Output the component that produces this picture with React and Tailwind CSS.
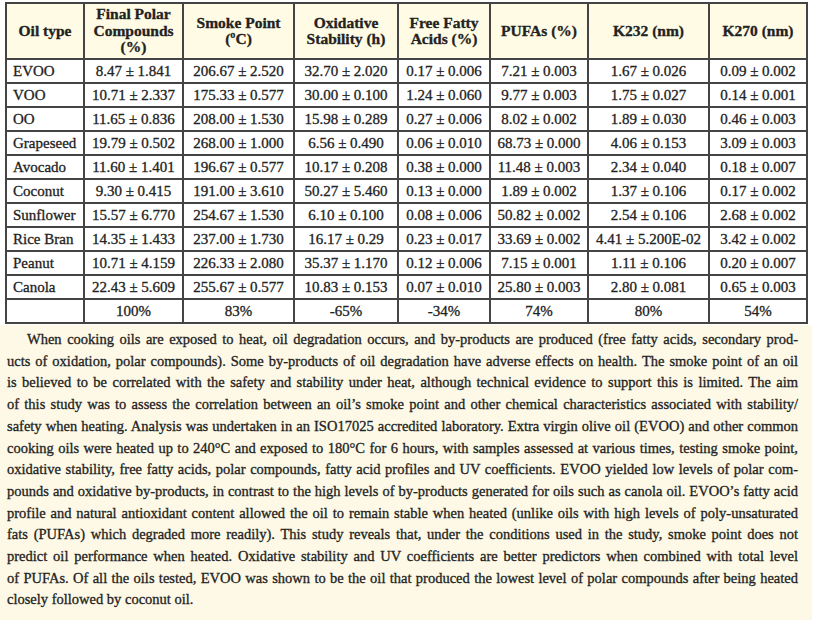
const headers = [
  ['Oil type'],
  ['Final Polar', 'Compounds', '(%)'],
  ['Smoke Point', '(ºC)'],
  ['Oxidative', 'Stability (h)'],
  ['Free Fatty', 'Acids (%)'],
  ['PUFAs (%)'],
  ['K232 (nm)'],
  ['K270 (nm)'],
];

const colWidths = ['w-[78px]', 'w-[99px]', 'w-[111px]', 'w-[104px]', 'w-[92px]', 'w-[98px]', 'w-[121px]', 'w-[98px]'];

const rows = [
  ['EVOO', '8.47 ± 1.841', '206.67 ± 2.520', '32.70 ± 2.020', '0.17 ± 0.006', '7.21 ± 0.003', '1.67 ± 0.026', '0.09 ± 0.002'],
  ['VOO', '10.71 ± 2.337', '175.33 ± 0.577', '30.00 ± 0.100', '1.24 ± 0.060', '9.77 ± 0.003', '1.75 ± 0.027', '0.14 ± 0.001'],
  ['OO', '11.65 ± 0.836', '208.00 ± 1.530', '15.98 ± 0.289', '0.27 ± 0.006', '8.02 ± 0.002', '1.89 ± 0.030', '0.46 ± 0.003'],
  ['Grapeseed', '19.79 ± 0.502', '268.00 ± 1.000', '6.56 ± 0.490', '0.06 ± 0.010', '68.73 ± 0.000', '4.06 ± 0.153', '3.09 ± 0.003'],
  ['Avocado', '11.60 ± 1.401', '196.67 ± 0.577', '10.17 ± 0.208', '0.38 ± 0.000', '11.48 ± 0.003', '2.34 ± 0.040', '0.18 ± 0.007'],
  ['Coconut', '9.30 ± 0.415', '191.00 ± 3.610', '50.27 ± 5.460', '0.13 ± 0.000', '1.89 ± 0.002', '1.37 ± 0.106', '0.17 ± 0.002'],
  ['Sunflower', '15.57 ± 6.770', '254.67 ± 1.530', '6.10 ± 0.100', '0.08 ± 0.006', '50.82 ± 0.002', '2.54 ± 0.106', '2.68 ± 0.002'],
  ['Rice Bran', '14.35 ± 1.433', '237.00 ± 1.730', '16.17 ± 0.29', '0.23 ± 0.017', '33.69 ± 0.002', '4.41 ± 5.200E-02', '3.42 ± 0.002'],
  ['Peanut', '10.71 ± 4.159', '226.33 ± 2.080', '35.37 ± 1.170', '0.12 ± 0.006', '7.15 ± 0.001', '1.11 ± 0.106', '0.20 ± 0.007'],
  ['Canola', '22.43 ± 5.609', '255.67 ± 0.577', '10.83 ± 0.153', '0.07 ± 0.010', '25.80 ± 0.003', '2.80 ± 0.081', '0.65 ± 0.003'],
  ['', '100%', '83%', '-65%', '-34%', '74%', '80%', '54%'],
];

// one entry per printed line, so the breaks land where the original has them
const lines = [
  'When cooking oils are exposed to heat, oil degradation occurs, and by-products are produced (free fatty acids, secondary prod-',
  'ucts of oxidation, polar compounds). Some by-products of oil degradation have adverse effects on health. The smoke point of an oil',
  'is believed to be correlated with the safety and stability under heat, although technical evidence to support this is limited. The aim',
  'of this study was to assess the correlation between an oil’s smoke point and other chemical characteristics associated with stability/',
  'safety when heating. Analysis was undertaken in an ISO17025 accredited laboratory. Extra virgin olive oil (EVOO) and other common',
  'cooking oils were heated up to 240°C and exposed to 180°C for 6 hours, with samples assessed at various times, testing smoke point,',
  'oxidative stability, free fatty acids, polar compounds, fatty acid profiles and UV coefficients. EVOO yielded low levels of polar com-',
  'pounds and oxidative by-products, in contrast to the high levels of by-products generated for oils such as canola oil. EVOO’s fatty acid',
  'profile and natural antioxidant content allowed the oil to remain stable when heated (unlike oils with high levels of poly-unsaturated',
  'fats (PUFAs) which degraded more readily). This study reveals that, under the conditions used in the study, smoke point does not',
  'predict oil performance when heated. Oxidative stability and UV coefficients are better predictors when combined with total level',
  'of PUFAs. Of all the oils tested, EVOO was shown to be the oil that produced the lowest level of polar compounds after being heated',
  'closely followed by coconut oil.',
];

export default function App() {
  return (
    <div className="w-[820px] h-[620px] overflow-hidden bg-white text-[#222] font-['Liberation_Serif',serif] [-webkit-text-stroke:0.3px_#222]">
      {/* Table */}
      <div className="pt-[2px] pl-[5px]">
        <table className="table-fixed border-collapse border-2 border-[#444]">
          <colgroup>
            {colWidths.map((w, i) => (
              <col key={i} className={w} />
            ))}
          </colgroup>
          <thead>
            <tr className="h-[56px] bg-[#fffbe4]">
              {headers.map((h, i) => (
                <th
                  key={i}
                  className="border-2 border-[#444] px-1 text-center align-middle text-[15.5px] font-bold leading-[16.5px]"
                >
                  {h.map((part, j) => (
                    <div key={j}>{part}</div>
                  ))}
                </th>
              ))}
            </tr>
          </thead>
          <tbody>
            {rows.map((row, r) => (
              <tr key={r} className="h-[24px]">
                {row.map((cell, c) => (
                  <td
                    key={c}
                    className={`border-2 border-[#444] py-0 text-[15px] leading-[18px] whitespace-nowrap ${
                      c === 0 ? 'pl-[6px] text-left' : 'text-center'
                    }`}
                  >
                    {cell}
                  </td>
                ))}
              </tr>
            ))}
          </tbody>
        </table>
      </div>

      {/* Abstract */}
      <div className="w-[812px] h-full mt-[1px] bg-[#fdf9e6] pl-[7px] pr-[14px] pt-[4px] text-[14.5px] leading-[21.7px]">
        {lines.map((line, i) => (
          <div
            key={i}
            className={`whitespace-nowrap ${i === 0 ? 'pl-[20px]' : ''} ${
              i < lines.length - 1 ? 'text-justify [text-align-last:justify]' : 'text-left'
            }`}
          >
            {line}
          </div>
        ))}
      </div>
    </div>
  );
}
